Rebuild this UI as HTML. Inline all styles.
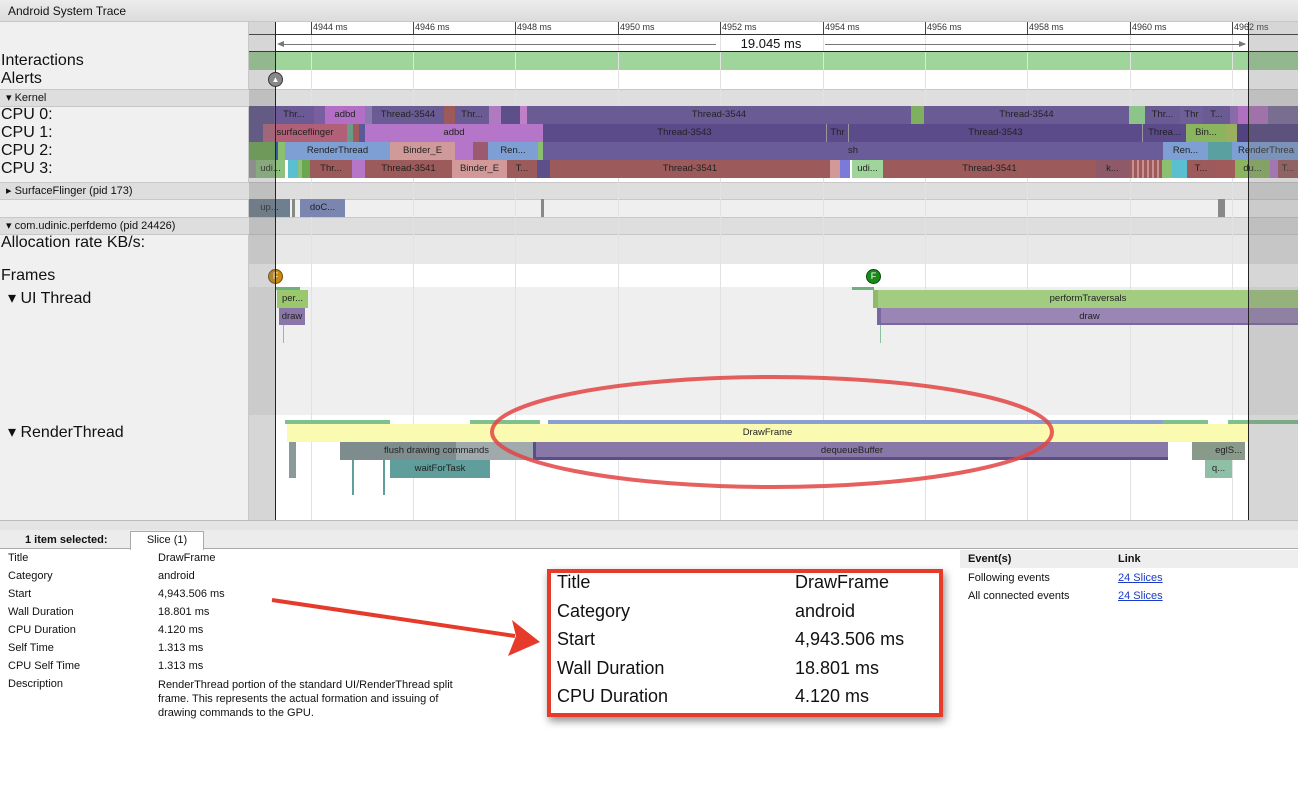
<!DOCTYPE html>
<html><head><meta charset="utf-8"><style>
*{margin:0;padding:0;box-sizing:border-box}
body{width:1298px;height:807px;position:relative;overflow:hidden;background:#fff;font-family:"Liberation Sans",sans-serif;color:#111}
.a{position:absolute}
.s{position:absolute;height:18px;font-size:9.5px;line-height:18px;text-align:center;color:#222;overflow:hidden;white-space:nowrap}
.lbl{position:absolute;left:1px;font-size:16px;line-height:18px}
.hdr{position:absolute;left:0;width:1298px;background:#dedede;border-top:1px solid #c8c8c8;border-bottom:1px solid #c8c8c8;font-size:11px;line-height:16px;padding-left:6px}
.g{position:absolute;top:22px;width:1px;height:498px;background:#e2e2e2}
.tk{position:absolute;top:22px;font-size:9px;border-left:1px solid #444;padding-left:1px;height:12px;line-height:10px;color:#333}
.r{position:absolute;font-size:11px}
.big{position:absolute;font-size:18px}
</style></head><body>
<div class="a" style="left:0;top:0;width:1298px;height:22px;background:linear-gradient(#ececec,#dcdcdc);border-bottom:1px solid #c8c8c8;font-size:12px;line-height:22px;padding-left:8px">Android System Trace</div>
<div class="a" style="left:0;top:22px;width:249px;height:498px;background:#f0f0f0;border-right:1px solid #c8c8c8"></div>
<div class="a" style="left:249px;top:22px;width:1049px;height:30px;background:#fff"></div>
<div class="a" style="left:249px;top:52px;width:1049px;height:18px;background:#9fd49a"></div>
<div class="a" style="left:249px;top:70px;width:1049px;height:19px;background:#fff"></div>
<div class="a" style="left:249px;top:106px;width:1049px;height:76px;background:#fff"></div>
<div class="a" style="left:249px;top:199px;width:1049px;height:19px;background:#efefef"></div>
<div class="a" style="left:249px;top:234px;width:1049px;height:30px;background:#e8e8e8"></div>
<div class="a" style="left:249px;top:264px;width:1049px;height:23px;background:#fff"></div>
<div class="a" style="left:249px;top:287px;width:1049px;height:128px;background:#efefef"></div>
<div class="a" style="left:249px;top:415px;width:1049px;height:105px;background:#fff"></div>
<div class="hdr" style="top:89px;height:18px">▾ Kernel</div>
<div class="hdr" style="top:182px;height:18px">▸ SurfaceFlinger (pid 173)</div>
<div class="hdr" style="top:217px;height:18px">▾ com.udinic.perfdemo (pid 24426)</div>
<div class="g" style="left:311px"></div><div class="g" style="left:413px"></div><div class="g" style="left:515px"></div><div class="g" style="left:618px"></div><div class="g" style="left:720px"></div><div class="g" style="left:823px"></div><div class="g" style="left:925px"></div><div class="g" style="left:1027px"></div><div class="g" style="left:1130px"></div><div class="g" style="left:1232px"></div>
<div class="a" style="left:249px;top:34px;width:1049px;height:1px;background:#333"></div>
<div class="tk" style="left:311px">4944 ms</div><div class="tk" style="left:413px">4946 ms</div><div class="tk" style="left:515px">4948 ms</div><div class="tk" style="left:618px">4950 ms</div><div class="tk" style="left:720px">4952 ms</div><div class="tk" style="left:823px">4954 ms</div><div class="tk" style="left:925px">4956 ms</div><div class="tk" style="left:1027px">4958 ms</div><div class="tk" style="left:1130px">4960 ms</div><div class="tk" style="left:1232px">4962 ms</div>
<div class="a" style="left:280px;top:44px;width:436px;height:1px;background:#777"></div>
<div class="a" style="left:825px;top:44px;width:420px;height:1px;background:#777"></div>
<div class="a" style="left:277px;top:41px;width:0;height:0;border-top:3px solid transparent;border-bottom:3px solid transparent;border-right:7px solid #777"></div>
<div class="a" style="left:1239px;top:41px;width:0;height:0;border-top:3px solid transparent;border-bottom:3px solid transparent;border-left:7px solid #777"></div>
<div class="a" style="left:716px;top:36px;width:110px;font-size:13px;text-align:center">19.045 ms</div>
<div class="a" style="left:249px;top:51px;width:1049px;height:1px;background:#222"></div>
<div class="lbl" style="top:52px">Interactions</div>
<div class="lbl" style="top:70px">Alerts</div>
<div class="lbl" style="top:106px">CPU 0:</div>
<div class="lbl" style="top:124px">CPU 1:</div>
<div class="lbl" style="top:142px">CPU 2:</div>
<div class="lbl" style="top:160px">CPU 3:</div>
<div class="lbl" style="top:234px">Allocation rate KB/s:</div>
<div class="lbl" style="top:267px">Frames</div>
<div class="lbl" style="top:290px;left:8px">▾ UI Thread</div>
<div class="lbl" style="top:424px;left:8px">▾ RenderThread</div>
<div class="s" style="top:106px;left:249px;width:25px;background:#5c4f8a"></div>
<div class="s" style="top:106px;left:274px;width:40px;background:#6c5a96">Thr...</div>
<div class="s" style="top:106px;left:314px;width:11px;background:#7a5fa0"></div>
<div class="s" style="top:106px;left:325px;width:40px;background:#b36fc6">adbd</div>
<div class="s" style="top:106px;left:365px;width:7px;background:#8a7ab0"></div>
<div class="s" style="top:106px;left:372px;width:72px;background:#6b5b95">Thread-3544</div>
<div class="s" style="top:106px;left:444px;width:11px;background:#9c5a5a"></div>
<div class="s" style="top:106px;left:455px;width:34px;background:#6b5b95">Thr...</div>
<div class="s" style="top:106px;left:489px;width:12px;background:#b07ac0"></div>
<div class="s" style="top:106px;left:501px;width:19px;background:#5c4f8a"></div>
<div class="s" style="top:106px;left:520px;width:7px;background:#c080c8"></div>
<div class="s" style="top:106px;left:527px;width:384px;background:#6b5b95">Thread-3544</div>
<div class="s" style="top:106px;left:911px;width:13px;background:#7fb060"></div>
<div class="s" style="top:106px;left:924px;width:205px;background:#6b5b95">Thread-3544</div>
<div class="s" style="top:106px;left:1129px;width:16px;background:#8cc48a"></div>
<div class="s" style="top:106px;left:1145px;width:35px;background:#6b5b95">Thr...</div>
<div class="s" style="top:106px;left:1180px;width:23px;background:#6f5f99">Thr</div>
<div class="s" style="top:106px;left:1203px;width:27px;background:#6b5b95">T...</div>
<div class="s" style="top:106px;left:1230px;width:8px;background:#8a6aa8"></div>
<div class="s" style="top:106px;left:1238px;width:30px;background:#b070c0"></div>
<div class="s" style="top:106px;left:1268px;width:30px;background:#7a6a9a"></div>
<div class="s" style="top:124px;left:249px;width:14px;background:#5c4f8a"></div>
<div class="s" style="top:124px;left:263px;width:84px;background:#b06077">surfaceflinger</div>
<div class="s" style="top:124px;left:347px;width:6px;background:#6a9a8a"></div>
<div class="s" style="top:124px;left:353px;width:6px;background:#a05a5a"></div>
<div class="s" style="top:124px;left:359px;width:6px;background:#5a5a9a"></div>
<div class="s" style="top:124px;left:365px;width:178px;background:#b576c9">adbd</div>
<div class="s" style="top:124px;left:543px;width:283px;background:#5b4b8a">Thread-3543</div>
<div class="s" style="top:124px;left:826px;width:22px;background:#5b4b8a;border-left:1px solid #999">Thr</div>
<div class="s" style="top:124px;left:848px;width:294px;background:#5b4b8a;border-left:1px solid #999">Thread-3543</div>
<div class="s" style="top:124px;left:1142px;width:44px;background:#5b4b8a;border-left:1px solid #999">Threa...</div>
<div class="s" style="top:124px;left:1186px;width:40px;background:#8ab55e">Bin...</div>
<div class="s" style="top:124px;left:1226px;width:11px;background:#9ab060"></div>
<div class="s" style="top:124px;left:1237px;width:61px;background:#514280"></div>
<div class="s" style="top:142px;left:249px;width:26px;background:#6aa84f"></div>
<div class="s" style="top:142px;left:275px;width:3px;background:#3a5aa0"></div>
<div class="s" style="top:142px;left:278px;width:7px;background:#8cc070"></div>
<div class="s" style="top:142px;left:285px;width:105px;background:#7d9fd4">RenderThread</div>
<div class="s" style="top:142px;left:390px;width:65px;background:#d19a9a">Binder_E</div>
<div class="s" style="top:142px;left:455px;width:18px;background:#b576c9"></div>
<div class="s" style="top:142px;left:473px;width:15px;background:#9c5a70"></div>
<div class="s" style="top:142px;left:488px;width:50px;background:#7d9fd4">Ren...</div>
<div class="s" style="top:142px;left:538px;width:5px;background:#8cc070"></div>
<div class="s" style="top:142px;left:543px;width:620px;background:#6a5c98">sh</div>
<div class="s" style="top:142px;left:1163px;width:45px;background:#7d9fd4">Ren...</div>
<div class="s" style="top:142px;left:1208px;width:24px;background:#5aa0a0"></div>
<div class="s" style="top:142px;left:1232px;width:66px;background:#7d9fd4;text-align:left;padding-left:6px">RenderThrea</div>
<div class="s" style="top:160px;left:249px;width:7px;background:#999"></div>
<div class="s" style="top:160px;left:256px;width:29px;background:#8fc17e">udi...</div>
<div class="s" style="top:160px;left:288px;width:10px;background:#5ac0d0"></div>
<div class="s" style="top:160px;left:298px;width:4px;background:#8fc17e"></div>
<div class="s" style="top:160px;left:302px;width:8px;background:#6aa84f"></div>
<div class="s" style="top:160px;left:310px;width:42px;background:#9c5a5a">Thr...</div>
<div class="s" style="top:160px;left:352px;width:13px;background:#b576c9"></div>
<div class="s" style="top:160px;left:365px;width:87px;background:#9c5a5a">Thread-3541</div>
<div class="s" style="top:160px;left:452px;width:55px;background:#d39898">Binder_E</div>
<div class="s" style="top:160px;left:507px;width:30px;background:#9c5a5a">T...</div>
<div class="s" style="top:160px;left:537px;width:13px;background:#5c4f8a"></div>
<div class="s" style="top:160px;left:550px;width:280px;background:#9c5a5a">Thread-3541</div>
<div class="s" style="top:160px;left:830px;width:10px;background:#d39898"></div>
<div class="s" style="top:160px;left:840px;width:10px;background:#7a7ad8"></div>
<div class="s" style="top:160px;left:852px;width:31px;background:#9fd49a">udi...</div>
<div class="s" style="top:160px;left:883px;width:213px;background:#9c5a5a">Thread-3541</div>
<div class="s" style="top:160px;left:1096px;width:33px;background:#8e5a6a">k...</div>
<div class="s" style="top:160px;left:1129px;width:33px;background:repeating-linear-gradient(90deg,#9c5a5a 0 3px,#c89090 3px 5px)"></div>
<div class="s" style="top:160px;left:1162px;width:10px;background:#8cc070"></div>
<div class="s" style="top:160px;left:1172px;width:15px;background:#5ac0d0"></div>
<div class="s" style="top:160px;left:1187px;width:28px;background:#9c5a5a">T...</div>
<div class="s" style="top:160px;left:1215px;width:20px;background:#a05a5a"></div>
<div class="s" style="top:160px;left:1235px;width:35px;background:#8ab55e">du...</div>
<div class="s" style="top:160px;left:1270px;width:8px;background:#b576c9"></div>
<div class="s" style="top:160px;left:1278px;width:20px;background:#9c5a5a">T...</div>
<div class="s" style="top:199px;left:249px;width:41px;background:#6e7f8f">up...</div>
<div class="s" style="top:199px;left:292px;width:3px;background:#888"></div>
<div class="s" style="top:199px;left:300px;width:45px;background:#7b86b0">doC...</div>
<div class="s" style="top:199px;left:541px;width:3px;background:#888"></div>
<div class="s" style="top:199px;left:1218px;width:7px;background:#888"></div>
<div class="a" style="left:268px;top:269px;width:15px;height:15px;border-radius:50%;background:#c98a12;border:1px solid #6a4a00;color:#fff;font-size:9px;text-align:center;line-height:13px">F</div>
<div class="a" style="left:866px;top:269px;width:15px;height:15px;border-radius:50%;background:#1a8a1a;border:1px solid #0a4a0a;color:#fff;font-size:9px;text-align:center;line-height:13px">F</div>
<div class="a" style="left:276px;top:287px;width:24px;height:3px;background:#6fb07f"></div>
<div class="a" style="left:852px;top:287px;width:22px;height:3px;background:#6fb07f"></div>
<div class="s" style="top:290px;left:277px;width:31px;background:#9bc76f">per...</div>
<div class="s" style="top:308px;left:279px;width:26px;height:17px;background:#8a76a8">draw</div>
<div class="a" style="left:283px;top:325px;width:1px;height:18px;background:#8cc0a0"></div>
<div class="a" style="left:880px;top:325px;width:1px;height:18px;background:#8cc0a0"></div>
<div class="s" style="top:290px;left:873px;width:425px;background:#a2cc80;border-left:5px solid #8dbb6a">performTraversals</div>
<div class="s" style="top:308px;left:877px;width:421px;height:17px;background:#9a86b5;border-left:4px solid #7a66a0;border-bottom:2px solid #7a66a0">draw</div>
<div class="a" style="left:285px;top:420px;width:105px;height:4px;background:#7fc08f"></div>
<div class="a" style="left:470px;top:420px;width:70px;height:4px;background:#7fc08f"></div>
<div class="a" style="left:548px;top:420px;width:615px;height:4px;background:#8aa0d0"></div>
<div class="a" style="left:1163px;top:420px;width:45px;height:4px;background:#7fc08f"></div>
<div class="a" style="left:1228px;top:420px;width:70px;height:4px;background:#7fc08f"></div>
<div class="s" style="top:424px;left:287px;width:961px;background:#fafab0">DrawFrame</div>
<div class="s" style="top:442px;left:340px;width:193px;background:linear-gradient(90deg,#7f8c8d 0 60%,#a0aaad 60%)">flush drawing commands</div>
<div class="s" style="top:442px;left:533px;width:635px;background:#8878a8;border-bottom:3px solid #5c4c88;border-left:3px solid #5c4c88">dequeueBuffer</div>
<div class="s" style="top:460px;left:390px;width:100px;background:#5f9e9a">waitForTask</div>
<div class="s" style="top:442px;left:1192px;width:53px;background:#8a9a8a;text-align:right;padding-right:3px">eglS...</div>
<div class="s" style="top:460px;left:1205px;width:27px;background:#8fbfa7">q...</div>
<div class="a" style="left:289px;top:442px;width:7px;height:36px;background:#8a9a9a"></div>
<div class="a" style="left:352px;top:460px;width:2px;height:35px;background:#5f9e9a"></div>
<div class="a" style="left:383px;top:460px;width:2px;height:35px;background:#5f9e9a"></div>
<div class="a" style="left:249px;top:22px;width:26px;height:498px;background:rgba(120,120,120,.3)"></div>
<div class="a" style="left:1248px;top:22px;width:50px;height:498px;background:rgba(120,120,120,.3)"></div>
<div class="a" style="left:275px;top:22px;width:1px;height:498px;background:#222"></div>
<div class="a" style="left:1248px;top:22px;width:1px;height:498px;background:#222"></div>
<div class="a" style="left:268px;top:72px;width:15px;height:15px;border-radius:50%;background:#888;border:1px solid #333;color:#fff;font-size:8px;text-align:center;line-height:13px">▲</div>
<svg class="a" style="left:0;top:0" width="1298" height="807"><ellipse cx="772" cy="432" rx="280" ry="55" fill="none" stroke="#e24444" stroke-width="4" opacity=".85"/></svg>
<div class="a" style="left:0;top:520px;width:1298px;height:10px;background:#e4e4e4;border-top:1px solid #bbb"></div>
<div class="a" style="left:0;top:530px;width:1298px;height:19px;background:#ececec;border-bottom:1px solid #aaa"></div>
<div class="a" style="left:25px;top:534px;font-size:11px;font-weight:bold">1 item selected:</div>
<div class="a" style="left:130px;top:531px;width:74px;height:19px;background:#fff;border:1px solid #aaa;border-bottom:none;font-size:11px;text-align:center;line-height:17px">Slice (1)</div>
<div class="r" style="left:8px;top:552px">Title</div><div class="r" style="left:158px;top:552px">DrawFrame</div>
<div class="r" style="left:8px;top:570px">Category</div><div class="r" style="left:158px;top:570px">android</div>
<div class="r" style="left:8px;top:588px">Start</div><div class="r" style="left:158px;top:588px">4,943.506 ms</div>
<div class="r" style="left:8px;top:606px">Wall Duration</div><div class="r" style="left:158px;top:606px">18.801 ms</div>
<div class="r" style="left:8px;top:624px">CPU Duration</div><div class="r" style="left:158px;top:624px">4.120 ms</div>
<div class="r" style="left:8px;top:642px">Self Time</div><div class="r" style="left:158px;top:642px">1.313 ms</div>
<div class="r" style="left:8px;top:660px">CPU Self Time</div><div class="r" style="left:158px;top:660px">1.313 ms</div>
<div class="r" style="left:8px;top:678px">Description</div><div class="r" style="left:158px;top:678px;width:298px;line-height:14px">RenderThread portion of the standard UI/RenderThread split frame. This represents the actual formation and issuing of drawing commands to the GPU.</div>
<div class="a" style="left:960px;top:550px;width:338px;height:18px;background:#eee"></div>
<div class="r" style="left:968px;top:553px;font-weight:bold">Event(s)</div><div class="r" style="left:1118px;top:553px;font-weight:bold">Link</div>
<div class="r" style="left:968px;top:572px">Following events</div><div class="r" style="left:1118px;top:572px;color:#1a3ac8;text-decoration:underline">24 Slices</div>
<div class="r" style="left:968px;top:590px">All connected events</div><div class="r" style="left:1118px;top:590px;color:#1a3ac8;text-decoration:underline">24 Slices</div>
<div class="a" style="left:547px;top:569px;width:396px;height:148px;background:#fff;border:4px solid #e63a2a;box-shadow:2px 4px 8px rgba(0,0,0,.45)"></div>
<div class="big" style="left:557px;top:572px">Title</div><div class="big" style="left:795px;top:572px">DrawFrame</div>
<div class="big" style="left:557px;top:601px">Category</div><div class="big" style="left:795px;top:601px">android</div>
<div class="big" style="left:557px;top:629px">Start</div><div class="big" style="left:795px;top:629px">4,943.506 ms</div>
<div class="big" style="left:557px;top:658px">Wall Duration</div><div class="big" style="left:795px;top:658px">18.801 ms</div>
<div class="big" style="left:557px;top:686px">CPU Duration</div><div class="big" style="left:795px;top:686px">4.120 ms</div>
<svg class="a" style="left:0;top:0" width="1298" height="807"><path d="M272 600 L515 636" stroke="#e63a2a" stroke-width="4" fill="none"/><path d="M540 642 L508 656 L516 636 L512 620 Z" fill="#e63a2a"/></svg>
</body></html>
